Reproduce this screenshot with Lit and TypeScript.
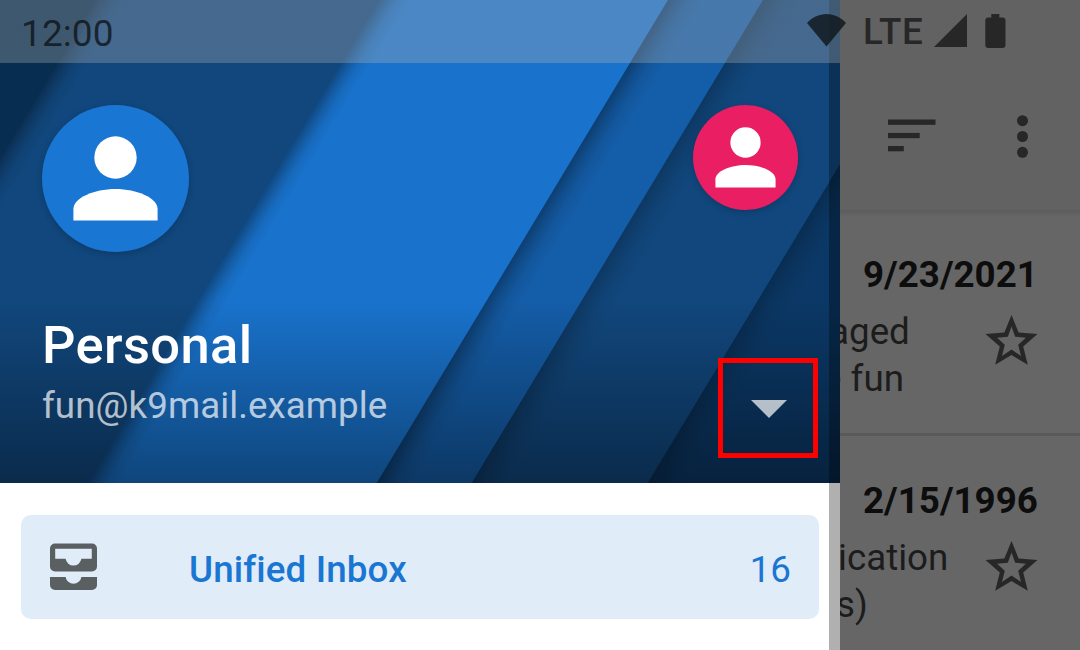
import { LitElement, html, svg, css } from "lit";
import { customElement, property } from "lit/decorators.js";

/** Diagonal bands of the header: x of the left edge at y = 0, base colour, edge shadow opacity and reach. */
const BANDS = [
  { x: 96, fill: "#11477d", shade: 0.34, reach: 22 },
  { x: 380, fill: "#1973cd", shade: 0.36, reach: 22 },
  { x: 668, fill: "#145da8", shade: 0.33, reach: 26 },
  { x: 763, fill: "#11477d", shade: 0.22, reach: 28 },
  { x: 939, fill: "#0b3866", shade: 0.2, reach: 28 },
];
const SLOPE = 0.603;
const HEADER = 483;

@customElement("account-avatar")
export class AccountAvatar extends LitElement {
  static styles = css`
    :host { display: block; border-radius: 50%; box-shadow: 0 2px 7px rgba(0, 0, 0, 0.2); }
    svg { display: block; width: 100%; height: 100%; }
  `;
  @property() color = "#1976d2";
  render() {
    return html`<svg viewBox="0 0 147 147">
      <circle cx="73.5" cy="73.5" r="73.5" fill=${this.color} />
      <circle cx="73.5" cy="52.5" r="21.2" fill="#fff" />
      <path d="M31.4 115.5V104C31.4 93 52 84 73.5 84s42.1 9 42.1 20v11.5z" fill="#fff" />
    </svg>`;
  }
}

@customElement("drawer-header")
export class DrawerHeader extends LitElement {
  static styles = css`
    :host { display: grid; height: 483px; }
    .art, .body { grid-area: 1 / 1; }
    .art { display: block; width: 840px; height: 483px; }
    .body { box-sizing: border-box; padding: 105px 22px 0 42px; display: flex; flex-direction: column; z-index: 1; }
    .avatars { display: flex; justify-content: space-between; align-items: flex-start; padding-right: 20px; height: 211px; }
    .big { width: 147px; height: 147px; }
    .small { width: 105px; height: 105px; }
    .row { display: flex; justify-content: space-between; }
    .name { font-size: 52.5px; line-height: 58px; font-weight: 500; color: #fff; letter-spacing: 0.36px; }
    .mail { font-size: 36.75px; line-height: 44px; margin-top: 10px; color: rgba(255, 255, 255, 0.7); letter-spacing: 0.05px; }
    .toggle { box-sizing: border-box; width: 100px; height: 100px; margin-top: 42px; border: 5px solid #f00;
      display: flex; justify-content: center; align-items: center; }
    .toggle svg { width: 36px; height: 18px; display: block; margin: 2px 0 0 2px; }
  `;
  render() {
    return html`
      <svg class="art" viewBox="0 0 840 483">
        <defs>
          ${BANDS.map(
            (b, i) => svg`<linearGradient id="s${i}" gradientUnits="userSpaceOnUse" x1=${b.x} y1="0" x2=${b.x + b.reach} y2=${b.reach * SLOPE}>
              <stop offset="0" stop-color="#000" stop-opacity=${b.shade} />
              <stop offset=".3" stop-color="#000" stop-opacity=${b.shade * 0.55} />
              <stop offset=".6" stop-color="#000" stop-opacity=${b.shade * 0.2} />
              <stop offset="1" stop-color="#000" stop-opacity="0" />
            </linearGradient>`
          )}
          <linearGradient id="fade" x1="0" y1="0" x2="0" y2="1">
            <stop offset="0" stop-color="#000" stop-opacity="0" />
            <stop offset="1" stop-color="#000" stop-opacity=".4" />
          </linearGradient>
        </defs>
        <rect width="840" height="483" fill="#072d50" />
        ${BANDS.map((b, i) => {
          const points = `${b.x},0 1200,0 1200,${HEADER} ${b.x - HEADER * SLOPE},${HEADER}`;
          return svg`<polygon points=${points} fill=${b.fill} /><polygon points=${points} fill="url(#s${i})" />`;
        })}
        <rect y="300" width="840" height="183" fill="url(#fade)" />
      </svg>
      <div class="body">
        <div class="avatars">
          <account-avatar class="big" color="#1976d2"></account-avatar>
          <account-avatar class="small" color="#e91e63"></account-avatar>
        </div>
        <div class="row">
          <div>
            <div class="name">Personal</div>
            <div class="mail">fun@k9mail.example</div>
          </div>
          <div class="toggle">
            <svg viewBox="0 0 36 18"><path d="M0 0H36L18 18z" fill="#fff" fill-opacity=".7" /></svg>
          </div>
        </div>
      </div>
    `;
  }
}

@customElement("app-root")
export class AppRoot extends LitElement {
  static styles = css`
    :host { display: block; position: relative; width: 1080px; height: 650px; overflow: hidden;
      background: #666; font-family: Roboto, "Liberation Sans", sans-serif; }
    svg { display: block; }
    .toolbar { box-sizing: border-box; height: 210px; background: #626262; padding: 115px 51px 0 888px;
      display: flex; justify-content: space-between; align-items: flex-start; }
    .edge { height: 7px; background: linear-gradient(#5c5c5c, #666); }
    .sort { padding-top: 4px; }
    .message { box-sizing: border-box; height: 226px; padding: 43px 42px 0 820px; border-bottom: 3px solid #595959; }
    .message.first { height: 219px; padding-top: 36px; }
    .date { font-size: 36.75px; line-height: 44px; font-weight: 700; color: #0d0d0d; padding-left: 43px; white-space: nowrap; }
    .content { display: flex; justify-content: space-between; padding-top: 11px; }
    .text { font-size: 36.75px; line-height: 47px; color: #1c1c1c; white-space: nowrap; }
    .l1 { padding-left: 9px; }
    .l2 { padding-left: 2px; }
    .l3 { padding-left: 18px; }
    .l4 { padding-left: 16px; }
    .star { margin-top: 7px; }

    .drawer { position: absolute; top: 0; left: 0; width: 840px; height: 650px; background: #fff; }
    .item { box-sizing: border-box; margin: 32px 21px 0; height: 104px; width: 798px; border-radius: 10px;
      background: #e0ecf8; color: #1976d2; padding: 0 28px 0 29px; display: flex; align-items: center;
      font-size: 36.75px; line-height: 44px; }
    .label { flex: 1; margin-left: 92px; font-weight: 500; padding-top: 6px; letter-spacing: 0.12px; }
    .count { padding-top: 6px; }
    .strip { position: absolute; top: 0; left: 829px; width: 11px; height: 650px; background: rgba(0, 0, 0, 0.31); }

    .status { position: absolute; top: 0; left: 0; width: 1080px; height: 63px; display: flex; align-items: flex-start;
      background: linear-gradient(90deg, rgba(178, 178, 178, 0.32) 840px, transparent 840px); }
    .clock { padding: 12px 0 0 21px; width: 807px; font-size: 37px; line-height: 44px; letter-spacing: 0.1px; color: rgba(13, 18, 22, 0.78); box-sizing: border-box; }
    .wifi { margin-top: 14px; }
    .lte { font-size: 36.75px; line-height: 44px; font-weight: 500; color: #272727; margin: 10px 0 0 17px; width: 71px; letter-spacing: 0.6px; }
    .signal { margin-top: 14px; }
    .battery { margin: 14px 0 0 18px; }
  `;

  private star() {
    return html`<svg class="star" width="53" height="51" viewBox="0 0 53 51">
      <path fill="#272727" fill-rule="evenodd"
        d="M26.5 0L33.6 17.5L52.5 19.1L38.2 31.5L42.8 49.8L26.5 40L10.2 49.8L14.8 31.5L.5 19.1L19.4 17.5zM26.5 11.5L22.8 21.8L12.1 22.7L19.8 29.8L17 40.9L26.5 34.6L36 40.9L33.2 29.8L40.9 22.7L30.2 21.8z" />
    </svg>`;
  }

  render() {
    return html`
      <div class="toolbar">
        <svg class="sort" width="48" height="33" viewBox="0 0 48 33" fill="#272727">
          <rect y=".5" width="47.5" height="5.3" /><rect y="13.9" width="31.7" height="5.3" /><rect y="27" width="15.8" height="5.3" />
        </svg>
        <svg width="13" height="43" viewBox="0 0 13 43" fill="#272727">
          <circle cx="6.5" cy="5.7" r="5.5" /><circle cx="6.5" cy="21.5" r="5.5" /><circle cx="6.5" cy="37.3" r="5.5" />
        </svg>
      </div>
      <div class="edge"></div>
      <div class="message first">
        <div class="date">9/23/2021</div>
        <div class="content">
          <div class="text"><div class="l1">aged</div><div class="l2">e fun</div></div>
          ${this.star()}
        </div>
      </div>
      <div class="message">
        <div class="date">2/15/1996</div>
        <div class="content">
          <div class="text"><div class="l3">ication</div><div class="l4">s)</div></div>
          ${this.star()}
        </div>
      </div>

      <div class="drawer">
        <drawer-header></drawer-header>
        <div class="item">
          <svg width="47" height="48" viewBox="0 0 47 48" fill="#5a5f62">
            <path fill-rule="evenodd"
              d="M5 .5H42A5 5 0 0 1 47 5.500V23.500A5 5 0 0 1 42 28.500H5A5 5 0 0 1 0 23.500V5.500A5 5 0 0 1 5 .5zM5.200 5.700V15.800H15.600A8 8 0 0 0 31.400 15.800H41.800V5.700z" />
            <path d="M0 34H15.600A8 8 0 0 0 31.400 34H47V42A5 5 0 0 1 42 47H5A5 5 0 0 1 0 42z" />
          </svg>
          <span class="label">Unified Inbox</span>
          <span class="count">16</span>
        </div>
        <div class="strip"></div>
      </div>

      <div class="status">
        <div class="clock">12:00</div>
        <svg class="wifi" width="39" height="33" viewBox="0 0 39 33">
          <path d="M19.500 32.500L0 9C5 3.500 12 0 19.500 0S34 3.500 39 9z" fill="rgb(13,18,22)" fill-opacity=".78" />
        </svg>
        <div class="lte">LTE</div>
        <svg class="signal" width="33" height="33" viewBox="0 0 33 33"><path d="M0 33L33 0V33z" fill="#272727" /></svg>
        <svg class="battery" width="21" height="34" viewBox="0 0 21 34">
          <path d="M6.300 0H14.300V3.500H17.500A3 3 0 0 1 20.500 6.500V31A3 3 0 0 1 17.500 34H3.300A3 3 0 0 1 .3 31V6.500A3 3 0 0 1 3.300 3.500H6.300z" fill="#272727" />
        </svg>
      </div>
    `;
  }
}
